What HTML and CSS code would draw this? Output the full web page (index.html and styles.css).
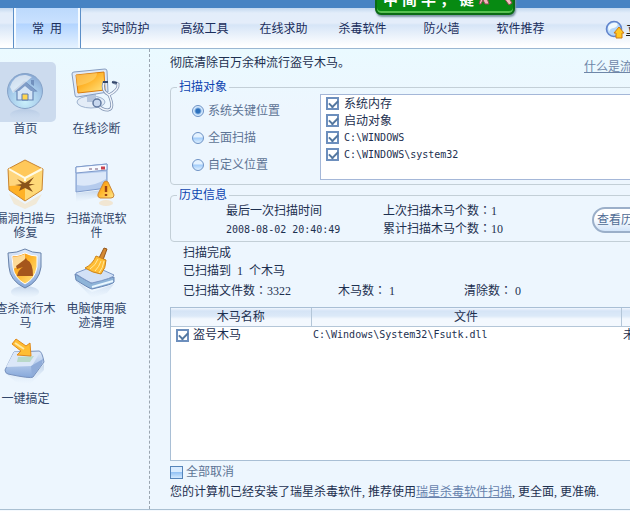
FILE: index.html
```html
<!DOCTYPE html>
<html lang="zh-CN">
<head>
<meta charset="utf-8">
<title>木马查杀</title>
<link rel="stylesheet" href="styles.css">
</head>
<body>
<header class="top">
  <nav class="tabs">
    <a class="tab active" href="#">常&nbsp;&nbsp;用</a>
    <a class="tab" href="#">实时防护</a>
    <a class="tab" href="#">高级工具</a>
    <a class="tab" href="#">在线求助</a>
    <a class="tab" href="#">杀毒软件</a>
    <a class="tab" href="#">防火墙</a>
    <a class="tab" href="#">软件推荐</a>
    <a class="update" href="#">
      <svg width="20" height="20" viewBox="0 0 20 20">
        <circle cx="9" cy="9" r="7.5" fill="#b4d7fa" stroke="#6284cc" stroke-width="1.6"/>
        <path d="M3 7Q6 2 12 3Q14 6 9 8Q5 8 4 12Z" fill="#f0f9ff"/>
        <path d="M14 7L19 13H17V18H11V13H9Z" fill="#ffc823" stroke="#cf7b10"/>
      </svg>立即升级</a>
  </nav>
  <div class="ime"><span>中</span><span>简</span><span>半</span><span>，</span><span>键</span>
    <svg width="40" height="14" viewBox="0 0 40 14">
      <path d="M2 0H10L9 6L11 12H7L5 8L3 12H1L3 6Z" fill="#f3b9bd" stroke="#8b4950"/>
      <path d="M23 2L27 0L34 11L31 13Z" fill="#f5c0c2" stroke="#8b4950"/>
    </svg>
  </div>
</header>
<div class="body">
  <aside class="side">
    <a class="tool current" href="#">
      <svg viewBox="0 0 60 60">
        <defs>
          <radialGradient id="ball" cx=".5" cy=".8" r=".8"><stop offset="0" stop-color="#c9f0fb"/><stop offset=".6" stop-color="#a4c8e9"/><stop offset="1" stop-color="#86a6d2"/></radialGradient>
          <linearGradient id="amber" x1="0" y1="0" x2="1" y2="1"><stop offset="0" stop-color="#f58a08"/><stop offset=".45" stop-color="#ffb52b"/><stop offset="1" stop-color="#ffe88a"/></linearGradient>
          <linearGradient id="steel" x1="0" y1="0" x2="0" y2="1"><stop offset="0" stop-color="#dfeafa"/><stop offset="1" stop-color="#86a8da"/></linearGradient>
          <linearGradient id="fade" x1="0" y1="0" x2="0" y2="1"><stop offset="0" stop-color="#a9bfdd" stop-opacity=".6"/><stop offset="1" stop-color="#c9dcf2" stop-opacity="0"/></linearGradient>
        </defs>
        <ellipse cx="29" cy="53" rx="15" ry="6" fill="url(#fade)"/>
        <circle cx="29" cy="29" r="17.5" fill="url(#ball)" stroke="#86a3c8"/>
        <path d="M18 29L29 20L40 29H37V38H21V29Z" fill="#d5e5f7" stroke="#6886b6" stroke-width="1.2"/>
        <path d="M18 29L28 19L40 29H35L29 24L23 29Z" fill="#7f9cc7"/>
        <path d="M35 18H38V24L35 22Z" fill="#7190bd"/>
        <path d="M26 38V32H32V38Z" fill="#ffd550" stroke="#5e7cb0"/>
        <path d="M14 25Q18 12 30 13L36 15L17 31Z" fill="#fff" opacity=".6"/>
      </svg><span>首页</span></a>
    <a class="tool" href="#">
      <svg viewBox="0 0 60 60">
        <ellipse cx="24" cy="40" rx="14" ry="6" fill="#e3ecf7" stroke="#9fb3cf"/>
        <path d="M20 32H29V40H20Z" fill="#b6c6de"/>
        <path d="M7 10L38 7Q40 7 40 9L41 30L10 35Q8 35 8 33L5 12Q5 10 7 10Z" fill="#dfe9f7" stroke="#879dc0"/>
        <path d="M9 13L37 10L38 28L11 31Z" fill="url(#amber)" stroke="#db7d0c"/>
        <path d="M9 13L30 11Q30 20 10 24Z" fill="#ffdc80" opacity=".5"/>
        <path d="M37 20Q34 29 42 33Q52 28 51 22L46 20M42 33Q48 47 41 48Q35 48 31 43" fill="none" stroke="#7f92b2" stroke-width="3"/>
        <path d="M37 20Q34 29 42 33Q52 28 51 22L46 20M42 33Q48 47 41 48Q35 48 31 43" fill="none" stroke="#f1f5fb" stroke-width="1.4"/>
        <path d="M36 20H41M45 20L50 21" stroke="#34486c" stroke-width="2"/>
        <circle cx="30" cy="41" r="4" fill="#c8d8ef" stroke="#60789f" stroke-width="1.5"/>
      </svg><span>在线诊断</span></a>
    <a class="tool" href="#">
      <svg viewBox="0 0 60 60">
        <path d="M13 42L29 52L46 42L40 52L29 57L18 52Z" fill="#f6dcb0" opacity=".5"/>
        <path d="M29 8L47 17L29 27L12 17Z" fill="#ffc85a"/>
        <path d="M12 17L29 27V49L13 38Z" fill="#ffb126"/>
        <path d="M47 17L29 27V49L46 38Z" fill="#ffd978"/>
        <path d="M12 17L29 27L29 33L13 34Z" fill="#ffe5a3" opacity=".7"/>
        <path d="M29 8L47 17L46 38L29 49L13 38L12 17Z" fill="none" stroke="#c98531"/>
        <path d="M13 17L29 26L46 17M29 26V29" fill="none" stroke="#fffbe6" stroke-width="2"/>
        <path d="M21 27L29 31L38 25L33 32L39 32L33 34L37 40L29 36L23 39L25 34L19 33L26 32Z" fill="#8a541b"/>
      </svg><span>漏洞扫描与修复</span></a>
    <a class="tool" href="#">
      <svg viewBox="0 0 60 60">
        <path d="M9 41L36 38V44L9 50Z" fill="url(#fade)"/>
        <path d="M9 15L40 12V36L9 40Z" fill="#b5cbed" stroke="#7f9bcc"/>
        <path d="M10 22L39 20V27Q24 36 10 33Z" fill="#dce8f9"/>
        <path d="M9 15L40 12V18L9 21Z" fill="#f7faff" stroke="#7f9bcc"/>
        <path d="M22 17H25M28 17H31" stroke="#b7a7b8" stroke-width="2"/><path d="M34 16H38" stroke="#c9414c" stroke-width="3"/>
        <path d="M37 30Q39 28 41 30L47 43Q47 46 44 46H33Q30 45 31 42Z" fill="url(#amber)" stroke="#cb8738"/>
        <path d="M39 34V40M39 42V44" stroke="#9b4113" stroke-width="2.4"/>
        <ellipse cx="39" cy="51" rx="7" ry="3" fill="#f6d6a8" opacity=".5"/>
      </svg><span>扫描流氓软件</span></a>
    <a class="tool" href="#">
      <svg viewBox="0 0 60 60">
        <ellipse cx="29" cy="50" rx="14" ry="6" fill="url(#fade)"/>
        <path d="M12 11Q21 11 29 7Q36 11 45 11V25Q43 40 29 46Q14 39 13 25Z" fill="url(#steel)" stroke="#6781a9"/>
        <path d="M16 14Q23 14 29 11Q35 14 41 14V25Q39 37 29 42Q18 36 17 25Z" fill="url(#amber)" stroke="#fff"/>
        <path d="M17 15Q23 15 29 12V22L17 27Z" fill="#fff3cf" opacity=".7"/>
        <path d="M21 34Q22 28 27 25L21 27L20 24L28 18L30 16L31 18Q37 20 37 34Z" fill="#a5561c"/>
      </svg><span>查杀流行木马</span></a>
    <a class="tool" href="#">
      <svg viewBox="0 0 60 60">
        <path d="M8 38L25 50L47 42L40 51L25 56Z" fill="url(#fade)"/>
        <path d="M8 32L24 41L47 35V40Q47 42 25 47Q23 47 9 38Z" fill="#8eb4d8" stroke="#6885b4"/>
        <path d="M9 31L27 24L47 33Q47 36 25 41Q23 41 9 32Z" fill="#d2e1f6" stroke="#7c98c6"/>
        <path d="M25 45L46 39" stroke="#e9f7ff" stroke-width="2"/>
        <path d="M37 6L40 7L36 18L32 16Z" fill="#d58a33" stroke="#94571d"/>
        <path d="M29 14L39 18Q39 26 34 32Q26 31 18 26Q26 22 29 14Z" fill="#ffbd35" stroke="#ce8418"/>
        <path d="M31 17Q29 23 23 27M34 19Q32 25 28 29M37 19Q36 26 32 31" fill="none" stroke="#ffe99a"/>
      </svg><span>电脑使用痕迹清理</span></a>
    <a class="tool" href="#">
      <svg viewBox="0 0 60 60">
        <path d="M9 41L34 46L48 32V38L34 52L20 50Z" fill="url(#fade)"/>
        <path d="M18 20L43 19Q46 19 48 30L37 45Q35 47 12 42Q9 41 9 38Z" fill="url(#steel)" stroke="#7892be"/>
        <path d="M18 20L44 20L36 34L10 35Z" fill="#dbe7f8"/>
        <path d="M22 25L38 24L34 30L21 30Z" fill="#b9d9c9"/>
        <path d="M35 34L47 27L46 32L36 45Z" fill="#90acd9"/>
        <path d="M16 12L20 7L30 14L34 11L35 24L21 23L25 19Z" fill="#ffbd32" stroke="#e08a1c"/>
        <path d="M19 11L28 17" stroke="#ffe9a0" stroke-width="2"/>
      </svg><span>一键搞定</span></a>
  </aside>
  <main class="main">
    <div class="intro"><span>彻底清除百万余种流行盗号木马。</span><a href="#">什么是流氓软件</a></div>
    <fieldset class="group target">
      <legend>扫描对象</legend>
      <div class="target-row">
        <div class="modes">
          <label><input type="radio" name="mode" checked>系统关键位置</label>
          <label><input type="radio" name="mode">全面扫描</label>
          <label><input type="radio" name="mode">自定义位置</label>
        </div>
        <div class="places">
          <label><input type="checkbox" checked>系统内存</label>
          <label><input type="checkbox" checked>启动对象</label>
          <label><input type="checkbox" checked><span class="path">C:\WINDOWS</span></label>
          <label><input type="checkbox" checked><span class="path">C:\WINDOWS\system32</span></label>
        </div>
      </div>
    </fieldset>
    <fieldset class="group history">
      <legend>历史信息</legend>
      <div class="history-row">
        <div>最后一次扫描时间<br><span class="path">2008-08-02 20:40:49</span></div>
        <div>上次扫描木马个数<span class="colon" lang="zh-TW">：</span>1<br>累计扫描木马个数<span class="colon" lang="zh-TW">：</span>10</div>
        <button type="button">查看历史</button>
      </div>
    </fieldset>
    <section class="status">
      <div>扫描完成</div>
      <div>已扫描到&nbsp; 1&nbsp; 个木马</div>
      <div class="counts"><span>已扫描文件数<span class="colon" lang="zh-TW">：</span>3322</span><span>木马数<span class="colon" lang="zh-TW">：</span>&nbsp;1</span><span>清除数<span class="colon" lang="zh-TW">：</span>&nbsp;0</span></div>
    </section>
    <div class="results">
      <table>
        <colgroup><col class="c-name"><col class="c-file"><col></colgroup>
        <thead><tr><th>木马名称</th><th>文件</th><th></th></tr></thead>
        <tbody><tr><td><label><input type="checkbox" checked>盗号木马</label></td><td class="path">C:\Windows\System32\Fsutk.dll</td><td>未处理</td></tr></tbody>
      </table>
    </div>
    <label class="all"><input type="checkbox">全部取消</label>
    <p class="note">您的计算机已经安装了瑞星杀毒软件, 推荐使用<a href="#">瑞星杀毒软件扫描</a>, 更全面, 更准确.</p>
  </main>
</div>
</body>
</html>
```
FILE: styles.css
```css
* { box-sizing: border-box; }

body {
  margin: 0;
  min-height: 100vh;
  display: flex;
  flex-direction: column;
  overflow: hidden;
  padding-bottom: 1px;
  background: #f4f9fe;
  color: #1d3050;
  font: 12px/16px "Liberation Serif", "Noto Sans CJK SC", serif;
  white-space: nowrap;
}

a { color: inherit; text-decoration: none; }
input { appearance: none; flex: none; margin: 0; }
.path { font-family: "DejaVu Sans Mono", "Noto Sans CJK SC", monospace; font-size: 10px; }
.colon { font-family: "Noto Sans CJK TC", sans-serif; }
span.path, .colon { line-height: 1px; }

/* Header */
.top { position: relative; border-top: 8px solid #4783c3; }
.tabs {
  display: flex;
  height: 41px;
  padding-left: 13px;
  border-bottom: 1px solid #9ab7d2;
  background: linear-gradient(#c3d8ef 0, #e3edfa 5px, #e4edfa 15px, #d6e5f7 17px, #fff 38px);
}
.tab { flex: none; width: 79px; line-height: 42px; text-align: center; color: #1b2e5c; }
.tab.active {
  width: 68px;
  margin-right: 5px;
  border: solid #5c8fc8;
  border-width: 0 1px;
  box-shadow: inset 2px 0 #f4faff, inset -2px 0 #f4faff;
  background: linear-gradient(#bcd9fc, #c9e1ff 15px, #b2d4ff 16px, #e5f2ff);
}
.update { display: flex; align-items: center; gap: 1px; margin-left: 45px; padding-top: 3px; color: #222; text-decoration: underline; }
.update svg { flex: none; }

.ime {
  position: absolute;
  top: -18px;
  left: 375px;
  display: flex;
  align-items: center;
  gap: 4px;
  width: 140px;
  height: 25px;
  padding: 0 6px 7px;
  border: 2px solid #0a6a14;
  border-radius: 6px;
  box-shadow: inset 0 -2px #58c152, 1px 2px 2px #7c95a4;
  background: #078a12;
  color: #fff;
  font: bold 15px/16px "Noto Sans CJK SC", sans-serif;
}
.ime svg { flex: none; }

/* Two columns */
.body {
  flex: 1;
  display: flex;
  border-bottom: 1px solid #aac0d2;
  background: linear-gradient(#eafaff, #edf6fe 60px, #edf6fe);
}
.side {
  flex: none;
  display: grid;
  grid-template-columns: 71px 71px;
  grid-auto-rows: 90px;
  width: 150px;
  padding-top: 13px;
  border-right: 1px dashed #9aa5b0;
}
.tool {
  margin-left: -10px;
  margin-right: 10px;
  line-height: 14px;
  text-align: center;
  color: #33476b;
  white-space: normal;
}
.tool svg { display: block; width: 60px; height: 60px; margin: 0 auto; overflow: visible; }
.tool span { display: block; }
.tool.current svg { border-radius: 5px; background: #ccdbee; }

.main { flex: 1; display: flex; flex-direction: column; margin-right: -60px; padding: 6px 0 9px 20px; }
.intro { display: flex; justify-content: space-between; padding-right: 22px; }
.intro a { padding-top: 4px; margin-bottom: -4px; color: #6e86a8; text-decoration: underline; }

.group { min-width: 0; margin: 0; padding: 0; border: 1px solid #c3cfd7; border-radius: 4px; }
.group legend { margin-left: 6px; padding: 0 2px; line-height: 14px; color: #0c44b0; }
.target { margin-top: 9px; padding-bottom: 4px; }
.target-row { display: flex; }
.modes { flex: none; width: 149px; padding: 3px 0 0 21px; color: #5d7495; }
.modes label { display: flex; align-items: center; gap: 4px; height: 27px; }
.modes input {
  width: 12px;
  height: 12px;
  border: 1px solid #6d92c5;
  border-radius: 50%;
  background: linear-gradient(#e4f2ff 40%, #a1ccfa 50%, #dff0ff);
}
.modes input:checked { background: radial-gradient(circle, #2c70bd 0 2px, #d5eaff 4px); }
.places { flex: 1; height: 86px; padding: 0 5px; border: 1px solid #a4b7d8; background: #fff; }
.places label { display: flex; align-items: center; gap: 5px; height: 17px; }

input[type="checkbox"] { width: 13px; height: 13px; border: 2px solid #6d8fbd; background: #fff; }
input[type="checkbox"]:checked::before {
  content: "";
  display: block;
  width: 7px;
  height: 4px;
  margin: 1px;
  border: solid #54779f;
  border-width: 0 0 2px 2px;
  transform: rotate(-45deg);
}

.history { margin-top: 3px; padding-bottom: 3px; }
.history-row {
  display: grid;
  grid-template-columns: 157px 209px 84px;
  align-items: center;
  padding-left: 55px;
  line-height: 18px;
}
.history button {
  height: 26px;
  padding: 0 0 0 3px;
  border: 2px solid #9bafc9;
  border-radius: 13px;
  background: linear-gradient(#fff 40%, #d3e5fa);
  color: #4f6b94;
  font: inherit;
  text-align: left;
}

.status { margin-top: 2px; padding-left: 13px; line-height: 18px; }
.counts { display: grid; grid-template-columns: 155px 126px auto; margin-top: 2px; }

/* Results */
.results { flex: 1; margin-top: 7px; border: 1px solid #a9bfd5; background: #fff; }
table { width: 100%; table-layout: fixed; border-collapse: collapse; }
.c-name { width: 140px; }
.c-file { width: 310px; }
th {
  height: 18px;
  padding: 0;
  border: solid #b4c6d8;
  border-width: 0 0 1px 1px;
  background: linear-gradient(#f0f6fe, #d5e4f6 3px, #dce9f8 8px, #f3f8fe 11px);
  font-weight: normal;
}
th:first-child { border-left: 0; }
td { height: 18px; padding: 0 0 0 2px; }
td:first-child { padding-left: 5px; }
td label { display: flex; align-items: center; gap: 4px; }

.all { display: flex; align-items: center; gap: 3px; margin-top: 3px; color: #5d7495; }
.all input[type="checkbox"] {
  border: 1px solid #5584ba;
  background: linear-gradient(#d8ebff 45%, #95c3f5 50%, #d2e9ff);
}
.note { margin: 4px 0 0; }
.note a { color: #6783ad; text-decoration: underline; }
```
